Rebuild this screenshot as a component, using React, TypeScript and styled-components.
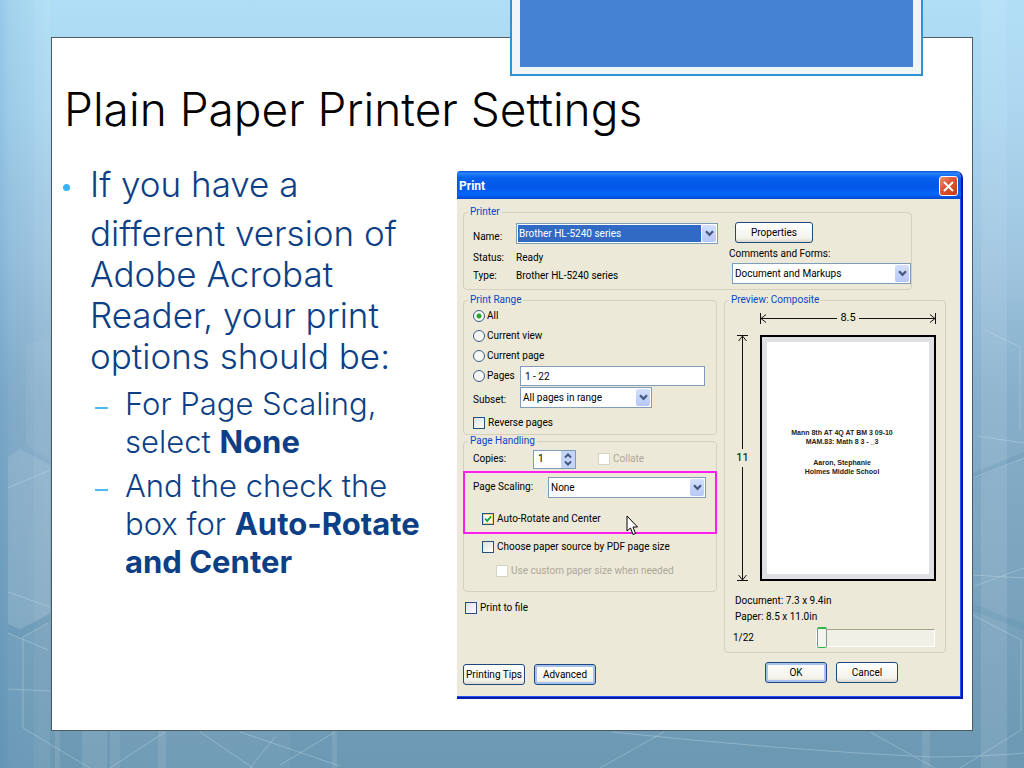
import React from 'react';
import styled, { createGlobalStyle, css } from 'styled-components';

const GlobalStyle = createGlobalStyle`
  *, *::before, *::after { box-sizing: border-box; }
  body { margin: 0; background: #6d98b4; }
`;

/* ---------- slide ---------- */

const Slide = styled.main`
  position: relative;
  display: flex;
  min-height: 100vh;
  padding: 37px 51px;
  overflow: hidden;
  font-family: Inter, 'Liberation Sans', sans-serif;
  background:
    linear-gradient(90deg, rgba(70, 140, 190, 0.25) 0, rgba(70, 140, 190, 0.16) 8px, rgba(70, 140, 190, 0) 50px),
    linear-gradient(180deg, #b0def6 0%, #a9d5ef 15%, #9cc3de 34%, #87aeca 52%, #7ba4be 75%, #6c98b4 100%);
`;

const Backdrop = styled.svg`
  position: absolute;
  inset: 0;
  width: 100%;
  height: 100%;
`;

const Card = styled.section`
  position: relative;
  flex: 1;
  min-width: 0;
  padding: 43px 9px 31px 10px;
  background: #fff;
  border: 1px solid #4d5a60;
`;

const Ribbon = styled.div`
  position: absolute;
  top: 0;
  right: 101px;
  width: 413px;
  height: 76px;
  padding: 0 8px 7px;
  background: #f0f5f7;
  border: 2px solid #2d93d8;
  border-top: 0;

  &::before {
    content: '';
    display: block;
    height: 100%;
    background: #4682d3;
  }
`;

const Title = styled.h1`
  margin: 0 0 27px;
  padding-left: 2px;
  font-size: 46px;
  line-height: 56px;
  font-weight: 300;
  color: #000;
`;

const Columns = styled.div`
  display: grid;
  grid-template-columns: 395fr 506fr;
  align-items: start;
`;

const Notes = styled.ul`
  margin: 0;
  padding: 0;
  list-style: none;
  color: #0d3f86;
`;

const Note = styled.li`
  position: relative;
  padding-left: 28px;
  font-size: 35px;
  line-height: 41px;
  font-weight: 300;

  &::before {
    content: '';
    position: absolute;
    left: 1px;
    top: 20px;
    width: 7px;
    height: 7px;
    border-radius: 50%;
    background: #38b4f5;
  }
`;

const Paragraph = styled.p`
  margin: 0 0 8px;
`;

const SubNotes = styled.ul`
  display: grid;
  gap: 6px;
  margin: 0;
  padding: 0 24px 0 0;
  list-style: none;
`;

const SubNote = styled.li`
  position: relative;
  padding-left: 35px;
  font-size: 31px;
  line-height: 38px;

  &::before {
    content: '';
    position: absolute;
    left: 5px;
    top: 22px;
    width: 13px;
    height: 2px;
    background: #4bbcf0;
  }
`;

const Strong = styled.strong`
  font-weight: 700;
`;

/* ---------- dialog ---------- */

const Dialog = styled.section`
  margin-top: 7px;
  border: solid #0019a8;
  border-width: 0 2px 2px 0;
  border-radius: 3px 7px 0 0;
  overflow: hidden;
  background: #ece9d8;
  font: 10px/14px Roboto, 'DejaVu Sans Condensed', sans-serif;
  color: #000;
`;

const TitleBar = styled.header`
  display: flex;
  align-items: center;
  justify-content: space-between;
  height: 28px;
  padding: 2px 3px 0 2px;
  background: linear-gradient(180deg, #0a4fd8 0%, #2a84fb 8%, #0560ee 24%, #0357e6 55%, #0465fd 85%, #0246c8 100%);
`;

const DialogName = styled.h2`
  margin: 0;
  font-size: 12px;
  line-height: 14px;
  font-weight: 700;
  color: #fff;
`;

const CloseButton = styled.button`
  display: grid;
  place-items: center;
  width: 19px;
  height: 20px;
  padding: 0;
  border: 1px solid #fff;
  border-radius: 3px;
  background: linear-gradient(135deg, #ee9078 0%, #dd5230 45%, #c83a14 100%);
`;

const Body = styled.form`
  padding: 7px 14px 11px 6px;
  border: solid #1f55ee;
  border-width: 0 1px 1px 0;
`;

const Group = styled.fieldset`
  min-width: 0;
  margin: 0;
  padding: 0;
  border: 1px solid #d3d1bd;
  border-radius: 4px;
`;

const PrinterGroup = styled(Group)`
  margin-right: 34px;
  padding-bottom: 5px;
`;

const Legend = styled.legend`
  margin-left: 4px;
  padding: 0 2px;
  line-height: 12px;
  color: #0b46c8;
`;

const Split = styled.div`
  display: grid;
  grid-template-columns: minmax(0, 254fr) minmax(0, 222fr);
  column-gap: 7px;
  padding-top: 4px;
`;

const PrinterLayout = styled.div`
  display: grid;
  grid-template-columns: minmax(0, 254fr) minmax(0, 182fr);
  column-gap: 11px;
`;

const PrinterInfo = styled.div`
  display: grid;
  grid-template-columns: 43px minmax(0, 1fr);
  grid-template-rows: 31px 18px 17px;
  align-items: center;
  padding-left: 9px;
`;

const PrinterActions = styled.div`
  display: flex;
  flex-direction: column;
  align-items: flex-start;
  padding-top: 4px;
`;

const Label = styled.label`
  line-height: 14px;
`;

const NameLabel = styled(Label)`
  padding-top: 6px;
`;

const FormsLabel = styled(Label)`
  margin: 4px 0 2px;
`;

const Value = styled.span`
  line-height: 14px;
`;

const SelectFrame = styled.div<{ $w?: string; $indent?: number }>`
  display: flex;
  align-items: stretch;
  flex: none;
  width: ${({ $w }) => $w ?? 'auto'};
  height: 21px;
  margin-left: ${({ $indent }) => $indent ?? 0}px;
  padding: 1px;
  border: 1px solid #7f9db9;
  background: #fff;
`;

const SelectBox = styled.select<{ $active?: boolean }>`
  flex: 1;
  min-width: 0;
  margin: 0;
  padding: 1px 1px 0;
  border: 0;
  border-radius: 0;
  appearance: none;
  font: inherit;
  color: #000;
  background: #fff;
  ${({ $active }) => $active && css`
    color: #fff;
    background: #316ac5;
  `}
`;

const ArrowBox = styled.span`
  display: grid;
  place-items: center;
  flex: none;
  width: 14px;
  margin-left: 1px;
  border-radius: 2px;
  background: linear-gradient(180deg, #d3e0fd, #b5c8f6);
`;

const Button = styled.button<{ $w: number; $focus?: boolean }>`
  width: ${({ $w }) => $w}px;
  height: 21px;
  padding: 0;
  border: 1px solid #1c4a80;
  border-radius: 3px;
  font: inherit;
  color: #000;
  white-space: nowrap;
  background: linear-gradient(180deg, #fff 0%, #f3f2ea 80%, #dcd8cb 100%);
  box-shadow: ${({ $focus }) => ($focus ? 'inset 0 0 0 2px #a9c1ee' : 'none')};
`;

const PropertiesButton = styled(Button)`
  margin-left: 6px;
`;

const Row = styled.div<{ $indent?: number; $top?: number }>`
  display: flex;
  align-items: center;
  height: 20px;
  margin-top: ${({ $top }) => $top ?? 0}px;
  padding-left: ${({ $indent }) => $indent ?? 9}px;
  padding-right: 11px;
  white-space: nowrap;
`;

const SubsetRow = styled(Row)`
  height: 22px;
`;

const CopiesRow = styled(Row)`
  height: 24px;
`;

const RangeGroup = styled(Group)`
  padding-bottom: 1px;
`;

const HandlingGroup = styled(Group)`
  padding-bottom: 10px;
`;

const Highlight = styled.div`
  position: relative;
  margin: 0 -1px;
  padding: 4px 0 3px;
  border: 2px solid #ff1cf0;
`;

const FieldLabel = styled(Label)<{ $w: number }>`
  flex: none;
  width: ${({ $w }) => $w}px;
`;

const SubsetLabel = styled(FieldLabel)`
  padding-top: 6px;
`;

const Radio = styled.input`
  flex: none;
  width: 12px;
  height: 12px;
  margin: 0 2px 0 0;
  appearance: none;
  border: 1px solid #3b5f86;
  border-radius: 50%;
  background: #f7f7f3;

  &:checked {
    background: radial-gradient(circle, #2aa52a 0 2px, #f7f7f3 3px);
  }
`;

const Check = styled.input`
  flex: none;
  width: 12px;
  height: 12px;
  margin: 0 3px 0 0;
  appearance: none;
  border: 1px solid #24527f;
  background: linear-gradient(135deg, #dfdfda, #fff);

  &:checked {
    background: #fff url("data:image/svg+xml,%3Csvg xmlns='http://www.w3.org/2000/svg' viewBox='0 0 10 10'%3E%3Cpath d='M2 4.5 4.2 7 8 2.4' fill='none' stroke='%2321a121' stroke-width='1.8'/%3E%3C/svg%3E");
    box-shadow: inset 0 0 0 1px #f6cf76;
  }

  &:disabled {
    border-color: #d6d3c2;
    background: #fff;
  }

  &:disabled + label {
    color: #aca899;
  }
`;

const CollateCheck = styled(Check)`
  margin-left: 22px;
`;

const TextInput = styled.input`
  flex: 1;
  min-width: 0;
  height: 20px;
  margin: 0;
  padding: 0 4px;
  border: 1px solid #7f9db9;
  border-radius: 0;
  font: inherit;
  background: #fff;
`;

const Spinner = styled.div`
  display: flex;
  width: 43px;
  height: 19px;
  border: 1px solid #7f9db9;
  background: #fff;
`;

const SpinnerInput = styled.input`
  flex: 1;
  min-width: 0;
  padding: 0 0 0 4px;
  border: 0;
  font: inherit;
  background: transparent;
`;

const SpinnerArrows = styled.span`
  display: grid;
  place-items: center;
  width: 14px;
  background: #c5d4f8;
`;

const Pointer = styled.svg`
  position: absolute;
  left: 161px;
  bottom: -4px;
  width: 12px;
  height: 21px;
`;

const Preview = styled(Group)`
  display: flex;
  flex-direction: column;
  padding-bottom: 3px;
`;

const PreviewGrid = styled.div`
  display: grid;
  grid-template-columns: 35px minmax(0, 1fr);
  grid-template-rows: 29px 246px;
  padding-right: 9px;
`;

const Dimension = styled.div<{ $vertical?: boolean }>`
  display: flex;
  align-items: center;
  gap: 3px;
  font-size: 11px;
  line-height: 12px;
  ${({ $vertical }) => $vertical
    ? css`
      grid-column: 1;
      flex-direction: column;
    `
    : css`
      grid-column: 2;
      height: 24px;
    `}
`;

const Stem = styled.span<{ $vertical?: boolean }>`
  position: relative;
  flex: 1;
  background: #111;
  ${({ $vertical }) => ($vertical ? 'width: 1px;' : 'height: 1px;')}
`;

const Head = styled.svg<{ $turn: number }>`
  position: absolute;
  width: 11px;
  height: 11px;
  transform: rotate(${({ $turn }) => $turn}deg);
  ${({ $turn }) => $turn === 0 && 'left: 0; top: -5px;'}
  ${({ $turn }) => $turn === 180 && 'right: 0; top: -5px;'}
  ${({ $turn }) => $turn === 90 && 'left: -5px; top: 0;'}
  ${({ $turn }) => $turn === 270 && 'left: -5px; bottom: 0;'}
`;

const Sheet = styled.div`
  grid-column: 2;
  display: flex;
  flex-direction: column;
  justify-content: center;
  gap: 12px;
  padding: 0 12px 13px 0;
  border: 2px solid #000;
  outline: 5px solid #e0dfe3;
  outline-offset: -7px;
  background: #fff;
  text-align: center;
  font: 700 7px/9px 'Liberation Sans', Arial, sans-serif;
  color: #222;
`;

const SheetText = styled.p`
  margin: 0;
`;

const PaperFacts = styled.p`
  margin: 12px 0 0 10px;
  line-height: 16px;
`;

const Pager = styled.div`
  display: flex;
  align-items: center;
  justify-content: space-between;
  height: 22px;
  margin-top: 2px;
  padding: 0 10px 0 8px;
`;

const Slider = styled.input`
  width: 119px;
  height: 22px;
  margin: 0;
  appearance: none;
  background: transparent;

  &::-webkit-slider-runnable-track {
    height: 18px;
    border: 1px solid #fff;
    border-top-color: #a5a290;
    background: #f1f0e6;
  }

  &::-webkit-slider-thumb {
    appearance: none;
    width: 10px;
    height: 21px;
    margin-top: -3px;
    border: 1px solid #7f9a88;
    border-top: 2px solid #2fb84a;
    border-bottom-color: #2fb84a;
    border-radius: 2px;
    background: #f5f5f0;
  }
`;

const Footer = styled(Split)`
  padding-top: 9px;
`;

const LeftButtons = styled.div`
  display: flex;
  gap: 9px;
  padding-top: 2px;
`;

const RightButtons = styled.div`
  display: flex;
  gap: 9px;
  padding-left: 41px;
`;

function Arrow() {
  return (
    <ArrowBox aria-hidden="true">
      <svg width="9" height="7" viewBox="0 0 9 7">
        <path d="M1 1.2 4.5 4.8 8 1.2" fill="none" stroke="#44597f" strokeWidth="2.2" />
      </svg>
    </ArrowBox>
  );
}

type DropDownProps = { id: string; value: string; width?: string; indent?: number; active?: boolean };

function DropDown({ id, value, width, indent, active }: DropDownProps) {
  return (
    <SelectFrame $w={width} $indent={indent}>
      <SelectBox id={id} $active={active}>
        <option>{value}</option>
      </SelectBox>
      <Arrow />
    </SelectFrame>
  );
}

function ArrowHead({ turn }: { turn: number }) {
  return (
    <Head $turn={turn} viewBox="0 0 11 11" aria-hidden="true">
      <path d="M.5 0v11M6 1.5 1 5.5l5 4" fill="none" stroke="#111" />
    </Head>
  );
}

function Ruler({ text, vertical }: { text: string; vertical?: boolean }) {
  return (
    <Dimension $vertical={vertical}>
      <Stem $vertical={vertical}><ArrowHead turn={vertical ? 90 : 0} /></Stem>
      {text}
      <Stem $vertical={vertical}><ArrowHead turn={vertical ? 270 : 180} /></Stem>
    </Dimension>
  );
}

function Scenery() {
  return (
    <Backdrop viewBox="0 0 1024 768" preserveAspectRatio="none" aria-hidden="true">
      <g fill="#fff">
        <path d="M8 0h26v768H8z" opacity=".03" />
        <path d="M34 0h16v768H34z" opacity=".07" />
        <path d="M8 457 20 449 50 465V614L20 629 8 624z" opacity=".1" />
        <path d="M26 345 50 338V460L26 445z" opacity=".05" />
        <path d="M981 0h26v768h-26z" opacity=".1" />
        <path d="M1007 0h17v300h-17z" opacity=".04" />
        <path d="M55 731h5v37h-5zM82 731h25v37H82zM110 731h10v37h-10zM158 731h8v37h-8zM332 731h5v37h-5zM922 731h8v37h-8z" opacity=".09" />
        <path d="M120 731h170v37H120z" opacity=".04" />
      </g>
      <g fill="#4f86a8" opacity=".18">
        <path d="M8 624 20 630 50 613V622L20 638 8 632z" />
        <path d="M973 473 1024 452V458L973 480zM973 604 1024 624V630L973 611z" />
      </g>
      <g fill="none" stroke="#d5e9f2" strokeWidth="1" opacity=".32">
        <path d="M8 488 50 470M8 592l42 15M8 633l40 17M8 689l42 2M48 623 23 637v91l67 40" />
        <path d="m110 768 55-36M200 732l53 36M240 732l100 34M275 737l-25 31M280 765l55-33" />
        <path d="M612 732q170 18 318 25 50 0 94-4M664 732l-64 36M870 732l65 36M960 768l61-38v-90l-48-25" />
        <path d="m975 586 49-18M973 575l51 3M977 436l47 7M985 330l35 17v83M973 478l51-20" />
      </g>
    </Backdrop>
  );
}

function PrinterSection() {
  return (
    <PrinterGroup>
      <Legend>Printer</Legend>
      <PrinterLayout>
        <PrinterInfo>
          <NameLabel htmlFor="name">Name:</NameLabel>
          <DropDown id="name" value="Brother HL-5240 series" active />
          <Value>Status:</Value>
          <Value>Ready</Value>
          <Value>Type:</Value>
          <Value>Brother HL-5240 series</Value>
        </PrinterInfo>
        <PrinterActions>
          <PropertiesButton type="button" $w={78}>Properties</PropertiesButton>
          <FormsLabel htmlFor="forms">Comments and Forms:</FormsLabel>
          <DropDown id="forms" value="Document and Markups" width="calc(100% - 3px)" indent={3} />
        </PrinterActions>
      </PrinterLayout>
    </PrinterGroup>
  );
}

function RangeSection() {
  return (
    <RangeGroup>
      <Legend>Print Range</Legend>
      <Row>
        <Radio type="radio" name="range" id="all" defaultChecked />
        <Label htmlFor="all">All</Label>
      </Row>
      <Row>
        <Radio type="radio" name="range" id="view" />
        <Label htmlFor="view">Current view</Label>
      </Row>
      <Row>
        <Radio type="radio" name="range" id="page" />
        <Label htmlFor="page">Current page</Label>
      </Row>
      <Row>
        <Radio type="radio" name="range" id="pages" />
        <FieldLabel $w={33} htmlFor="pages">Pages</FieldLabel>
        <TextInput aria-label="Page numbers" defaultValue="1 - 22" />
      </Row>
      <SubsetRow>
        <SubsetLabel $w={47} htmlFor="subset">Subset:</SubsetLabel>
        <DropDown id="subset" value="All pages in range" width="132px" />
      </SubsetRow>
      <Row $top={5}>
        <Check type="checkbox" id="reverse" />
        <Label htmlFor="reverse">Reverse pages</Label>
      </Row>
    </RangeGroup>
  );
}

function HandlingSection() {
  return (
    <HandlingGroup>
      <Legend>Page Handling</Legend>
      <CopiesRow>
        <FieldLabel $w={60} htmlFor="copies">Copies:</FieldLabel>
        <Spinner>
          <SpinnerInput id="copies" defaultValue="1" />
          <SpinnerArrows aria-hidden="true">
            <svg width="8" height="13" viewBox="0 0 8 13">
              <path d="M1 4.5 4 1.5l3 3M1 8.500l3 3 3-3" fill="none" stroke="#44597f" strokeWidth="2" />
            </svg>
          </SpinnerArrows>
        </Spinner>
        <CollateCheck type="checkbox" id="collate" disabled />
        <Label htmlFor="collate">Collate</Label>
      </CopiesRow>
      <Highlight>
        <Row $indent={8}>
          <FieldLabel $w={75} htmlFor="scaling">Page Scaling:</FieldLabel>
          <DropDown id="scaling" value="None" width="158px" />
        </Row>
        <Row $indent={17} $top={12}>
          <Check type="checkbox" id="rotate" defaultChecked />
          <Label htmlFor="rotate">Auto-Rotate and Center</Label>
        </Row>
        <Pointer viewBox="0 0 12 21" aria-hidden="true">
          <path d="M1 1v15l3.500-3 2.500 6.500 2.500-1L7 12h4.500z" fill="#fff" stroke="#000" />
        </Pointer>
      </Highlight>
      <Row $indent={18} $top={3}>
        <Check type="checkbox" id="source" />
        <Label htmlFor="source">Choose paper source by PDF page size</Label>
      </Row>
      <Row $indent={32} $top={4}>
        <Check type="checkbox" id="custom" disabled />
        <Label htmlFor="custom">Use custom paper size when needed</Label>
      </Row>
    </HandlingGroup>
  );
}

function PreviewSection() {
  return (
    <Preview>
      <Legend>Preview: Composite</Legend>
      <PreviewGrid>
        <Ruler text="8.5" />
        <Ruler text="11" vertical />
        <Sheet>
          <SheetText>Mann 8th AT 4Q AT BM 3 09-10<br />MAM.83: Math 8 3 - _3</SheetText>
          <SheetText>Aaron, Stephanie<br />Holmes Middle School</SheetText>
        </Sheet>
      </PreviewGrid>
      <PaperFacts>Document: 7.3 x 9.4in<br />Paper: 8.5 x 11.0in</PaperFacts>
      <Pager>
        <Label htmlFor="pager">1/22</Label>
        <Slider type="range" id="pager" min={1} max={22} defaultValue={1} />
      </Pager>
    </Preview>
  );
}

function PrintDialog() {
  return (
    <Dialog>
      <TitleBar>
        <DialogName>Print</DialogName>
        <CloseButton type="button" aria-label="Close">
          <svg width="11" height="11" viewBox="0 0 11 11">
            <path d="m1 1 9 9M10 1l-9 9" stroke="#fff" strokeWidth="2" />
          </svg>
        </CloseButton>
      </TitleBar>
      <Body>
        <PrinterSection />
        <Split>
          <div>
            <RangeSection />
            <HandlingSection />
            <Row $indent={2} $top={6}>
              <Check type="checkbox" id="file" />
              <Label htmlFor="file">Print to file</Label>
            </Row>
          </div>
          <PreviewSection />
        </Split>
        <Footer>
          <LeftButtons>
            <Button type="button" $w={62}>Printing Tips</Button>
            <Button type="button" $w={62} $focus>Advanced</Button>
          </LeftButtons>
          <RightButtons>
            <Button type="button" $w={62} $focus>OK</Button>
            <Button type="button" $w={62}>Cancel</Button>
          </RightButtons>
        </Footer>
      </Body>
    </Dialog>
  );
}

function NotesColumn() {
  return (
    <Notes>
      <Note>
        <Paragraph>If you have a</Paragraph>
        <Paragraph>different version of Adobe Acrobat Reader, your print options should be:</Paragraph>
        <SubNotes>
          <SubNote>For Page Scaling, select <Strong>None</Strong></SubNote>
          <SubNote>And the check the box for <Strong>Auto-Rotate and Center</Strong></SubNote>
        </SubNotes>
      </Note>
    </Notes>
  );
}

export default function App() {
  return (
    <>
      <GlobalStyle />
      <Slide>
        <Scenery />
        <Card>
          <Title>Plain Paper Printer Settings</Title>
          <Columns>
            <NotesColumn />
            <PrintDialog />
          </Columns>
        </Card>
        <Ribbon />
      </Slide>
    </>
  );
}
